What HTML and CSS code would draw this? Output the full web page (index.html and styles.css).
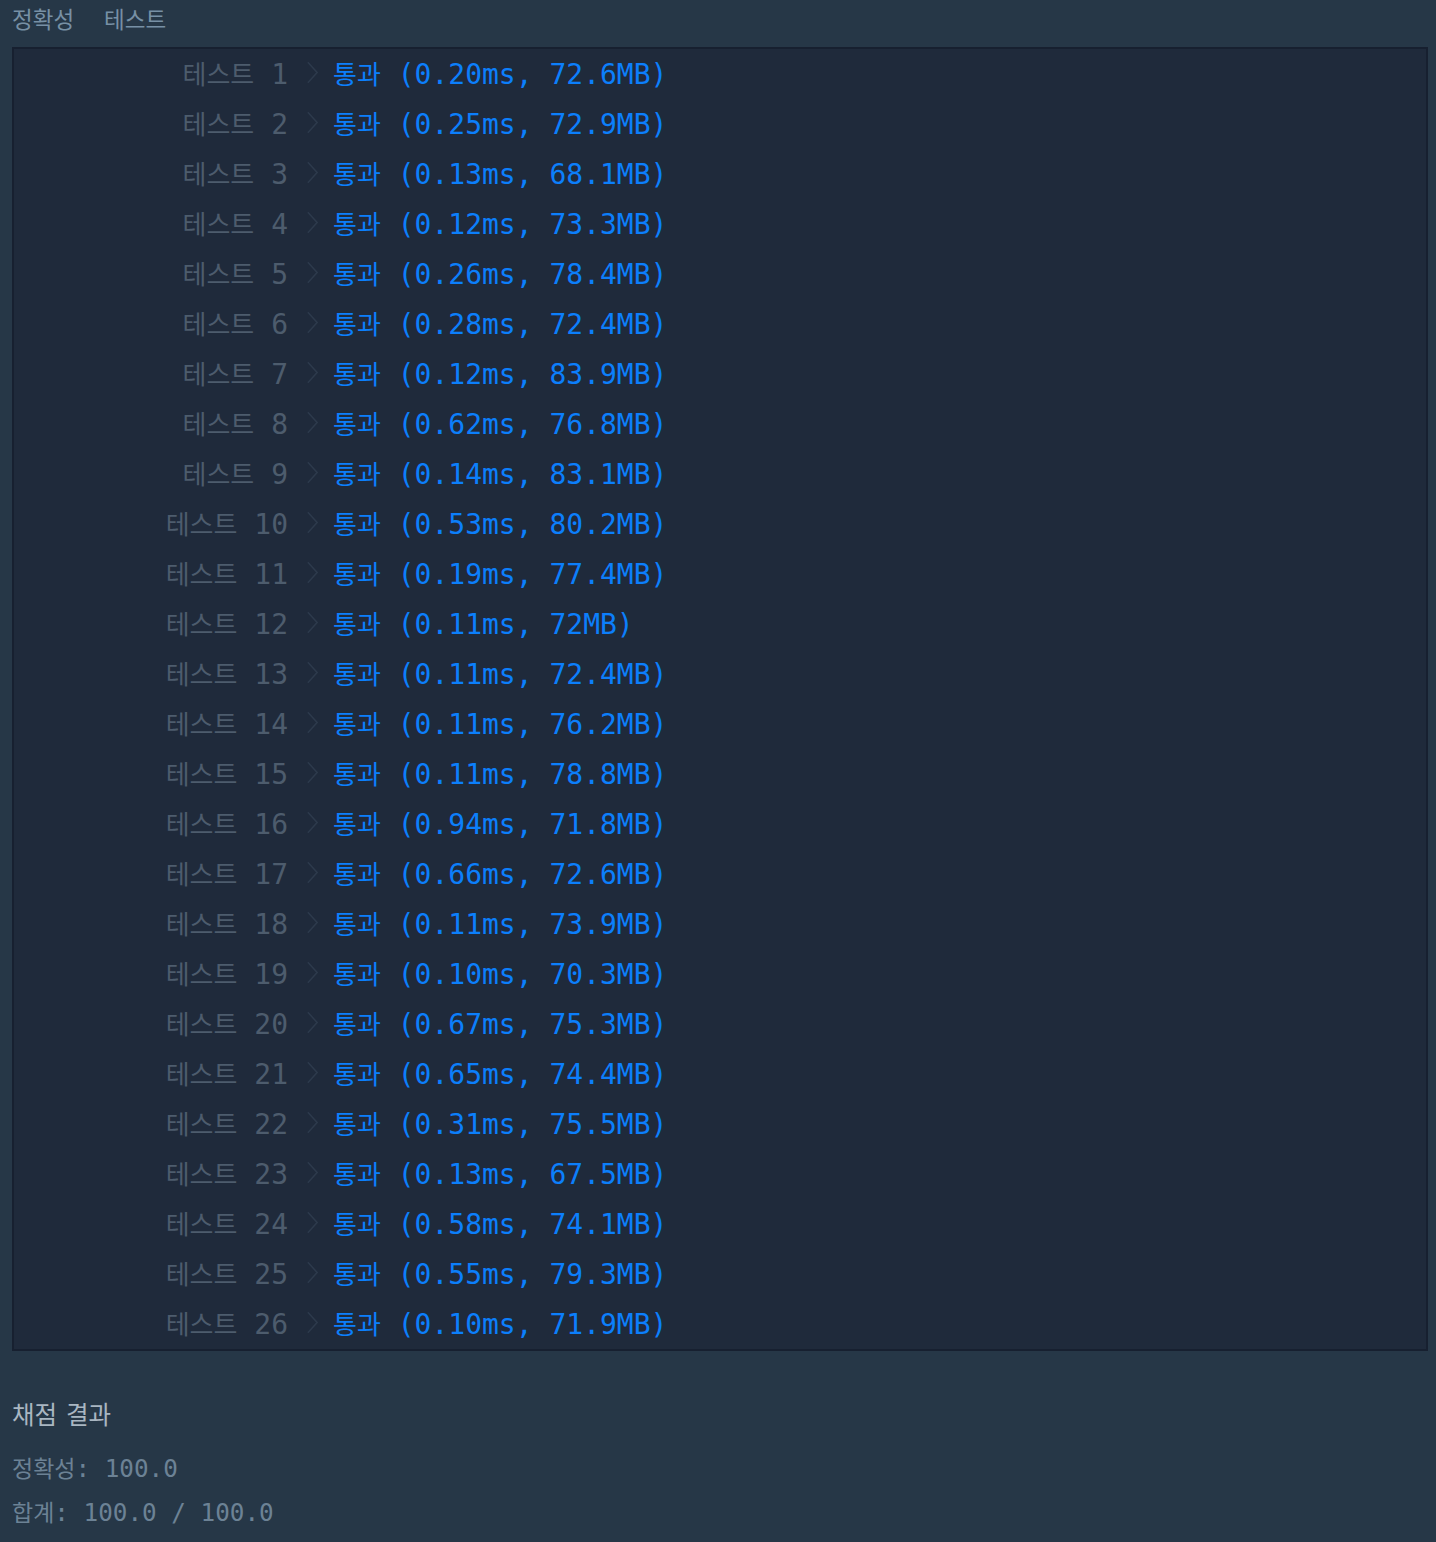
FILE: index.html
```html
<!DOCTYPE html>
<html lang="ko">
<head>
<meta charset="utf-8">
<link rel="stylesheet" href="styles.css">
</head>
<body>
<div class="page">
  <div class="tabs"><span class="tab">정확성</span><span class="tab">테스트</span></div>
  <div class="console">
    <div class="row"><span class="label"><span class="ko">테스트</span> 1</span><svg class="chev" viewBox="0 0 14 24"><polyline points="2,1 12,12 2,23"/></svg><span class="res"><span class="ko">통과</span> (0.20ms, 72.6MB)</span></div>
    <div class="row"><span class="label"><span class="ko">테스트</span> 2</span><svg class="chev" viewBox="0 0 14 24"><polyline points="2,1 12,12 2,23"/></svg><span class="res"><span class="ko">통과</span> (0.25ms, 72.9MB)</span></div>
    <div class="row"><span class="label"><span class="ko">테스트</span> 3</span><svg class="chev" viewBox="0 0 14 24"><polyline points="2,1 12,12 2,23"/></svg><span class="res"><span class="ko">통과</span> (0.13ms, 68.1MB)</span></div>
    <div class="row"><span class="label"><span class="ko">테스트</span> 4</span><svg class="chev" viewBox="0 0 14 24"><polyline points="2,1 12,12 2,23"/></svg><span class="res"><span class="ko">통과</span> (0.12ms, 73.3MB)</span></div>
    <div class="row"><span class="label"><span class="ko">테스트</span> 5</span><svg class="chev" viewBox="0 0 14 24"><polyline points="2,1 12,12 2,23"/></svg><span class="res"><span class="ko">통과</span> (0.26ms, 78.4MB)</span></div>
    <div class="row"><span class="label"><span class="ko">테스트</span> 6</span><svg class="chev" viewBox="0 0 14 24"><polyline points="2,1 12,12 2,23"/></svg><span class="res"><span class="ko">통과</span> (0.28ms, 72.4MB)</span></div>
    <div class="row"><span class="label"><span class="ko">테스트</span> 7</span><svg class="chev" viewBox="0 0 14 24"><polyline points="2,1 12,12 2,23"/></svg><span class="res"><span class="ko">통과</span> (0.12ms, 83.9MB)</span></div>
    <div class="row"><span class="label"><span class="ko">테스트</span> 8</span><svg class="chev" viewBox="0 0 14 24"><polyline points="2,1 12,12 2,23"/></svg><span class="res"><span class="ko">통과</span> (0.62ms, 76.8MB)</span></div>
    <div class="row"><span class="label"><span class="ko">테스트</span> 9</span><svg class="chev" viewBox="0 0 14 24"><polyline points="2,1 12,12 2,23"/></svg><span class="res"><span class="ko">통과</span> (0.14ms, 83.1MB)</span></div>
    <div class="row"><span class="label"><span class="ko">테스트</span> 10</span><svg class="chev" viewBox="0 0 14 24"><polyline points="2,1 12,12 2,23"/></svg><span class="res"><span class="ko">통과</span> (0.53ms, 80.2MB)</span></div>
    <div class="row"><span class="label"><span class="ko">테스트</span> 11</span><svg class="chev" viewBox="0 0 14 24"><polyline points="2,1 12,12 2,23"/></svg><span class="res"><span class="ko">통과</span> (0.19ms, 77.4MB)</span></div>
    <div class="row"><span class="label"><span class="ko">테스트</span> 12</span><svg class="chev" viewBox="0 0 14 24"><polyline points="2,1 12,12 2,23"/></svg><span class="res"><span class="ko">통과</span> (0.11ms, 72MB)</span></div>
    <div class="row"><span class="label"><span class="ko">테스트</span> 13</span><svg class="chev" viewBox="0 0 14 24"><polyline points="2,1 12,12 2,23"/></svg><span class="res"><span class="ko">통과</span> (0.11ms, 72.4MB)</span></div>
    <div class="row"><span class="label"><span class="ko">테스트</span> 14</span><svg class="chev" viewBox="0 0 14 24"><polyline points="2,1 12,12 2,23"/></svg><span class="res"><span class="ko">통과</span> (0.11ms, 76.2MB)</span></div>
    <div class="row"><span class="label"><span class="ko">테스트</span> 15</span><svg class="chev" viewBox="0 0 14 24"><polyline points="2,1 12,12 2,23"/></svg><span class="res"><span class="ko">통과</span> (0.11ms, 78.8MB)</span></div>
    <div class="row"><span class="label"><span class="ko">테스트</span> 16</span><svg class="chev" viewBox="0 0 14 24"><polyline points="2,1 12,12 2,23"/></svg><span class="res"><span class="ko">통과</span> (0.94ms, 71.8MB)</span></div>
    <div class="row"><span class="label"><span class="ko">테스트</span> 17</span><svg class="chev" viewBox="0 0 14 24"><polyline points="2,1 12,12 2,23"/></svg><span class="res"><span class="ko">통과</span> (0.66ms, 72.6MB)</span></div>
    <div class="row"><span class="label"><span class="ko">테스트</span> 18</span><svg class="chev" viewBox="0 0 14 24"><polyline points="2,1 12,12 2,23"/></svg><span class="res"><span class="ko">통과</span> (0.11ms, 73.9MB)</span></div>
    <div class="row"><span class="label"><span class="ko">테스트</span> 19</span><svg class="chev" viewBox="0 0 14 24"><polyline points="2,1 12,12 2,23"/></svg><span class="res"><span class="ko">통과</span> (0.10ms, 70.3MB)</span></div>
    <div class="row"><span class="label"><span class="ko">테스트</span> 20</span><svg class="chev" viewBox="0 0 14 24"><polyline points="2,1 12,12 2,23"/></svg><span class="res"><span class="ko">통과</span> (0.67ms, 75.3MB)</span></div>
    <div class="row"><span class="label"><span class="ko">테스트</span> 21</span><svg class="chev" viewBox="0 0 14 24"><polyline points="2,1 12,12 2,23"/></svg><span class="res"><span class="ko">통과</span> (0.65ms, 74.4MB)</span></div>
    <div class="row"><span class="label"><span class="ko">테스트</span> 22</span><svg class="chev" viewBox="0 0 14 24"><polyline points="2,1 12,12 2,23"/></svg><span class="res"><span class="ko">통과</span> (0.31ms, 75.5MB)</span></div>
    <div class="row"><span class="label"><span class="ko">테스트</span> 23</span><svg class="chev" viewBox="0 0 14 24"><polyline points="2,1 12,12 2,23"/></svg><span class="res"><span class="ko">통과</span> (0.13ms, 67.5MB)</span></div>
    <div class="row"><span class="label"><span class="ko">테스트</span> 24</span><svg class="chev" viewBox="0 0 14 24"><polyline points="2,1 12,12 2,23"/></svg><span class="res"><span class="ko">통과</span> (0.58ms, 74.1MB)</span></div>
    <div class="row"><span class="label"><span class="ko">테스트</span> 25</span><svg class="chev" viewBox="0 0 14 24"><polyline points="2,1 12,12 2,23"/></svg><span class="res"><span class="ko">통과</span> (0.55ms, 79.3MB)</span></div>
    <div class="row"><span class="label"><span class="ko">테스트</span> 26</span><svg class="chev" viewBox="0 0 14 24"><polyline points="2,1 12,12 2,23"/></svg><span class="res"><span class="ko">통과</span> (0.10ms, 71.9MB)</span></div>
  </div>
  <div class="summary">
    <div class="summary-title">채점 결과</div>
    <div class="summary-line"><span class="ko">정확성</span>: 100.0</div>
    <div class="summary-line"><span class="ko">합계</span>: 100.0 / 100.0</div>
  </div>
</div>
</body>
</html>
```
FILE: styles.css
```css
html, body {
  margin: 0;
  padding: 0;
  background: #263747;
}
.page {
  width: 1436px;
  min-height: 1542px;
  background: #263747;
  font-family: "DejaVu Sans Mono", "Liberation Mono", "Noto Sans CJK KR", monospace;
}
.tabs {
  height: 47px;
  display: flex;
  align-items: center;
  padding: 0 12px 12px;
  box-sizing: border-box;
  gap: 30px;
  font-family: "Noto Sans CJK KR", sans-serif;
  font-size: 22.5px;
  color: #7790a5;
}
.console {
  margin: 0 8px 0 12px;
  background: #1f2a3b;
  border: 2px solid #172030;
}
.row {
  height: 50px;
  display: flex;
  align-items: center;
  font-size: 28px;
  white-space: pre;
  padding-bottom: 3px;
  box-sizing: border-box;
}
.ko {
  font-family: "Noto Sans CJK KR", sans-serif;
  font-size: 26px;
}
.label {
  width: 274px;
  text-align: right;
  color: #4d5c6d;
}
.chev {
  width: 13px;
  height: 23px;
  margin-left: 18px;
  margin-right: 14px;
  fill: none;
  stroke: #2d3a4c;
  stroke-width: 1.6;
}
.res {
  color: #0c7ffb;
}
.summary {
  padding: 46px 12px 0;
}
.summary-title {
  font-family: "Noto Sans CJK KR", sans-serif;
  font-size: 24.5px;
  color: #a9b6c2;
  height: 34px;
  line-height: 34px;
  margin-bottom: 14px;
  word-spacing: 2px;
}
.summary-line {
  font-size: 24.3px;
  color: #6c8295;
  height: 44px;
  line-height: 44px;
  white-space: pre;
}
.summary-line .ko {
  font-size: 23px;
}
```
